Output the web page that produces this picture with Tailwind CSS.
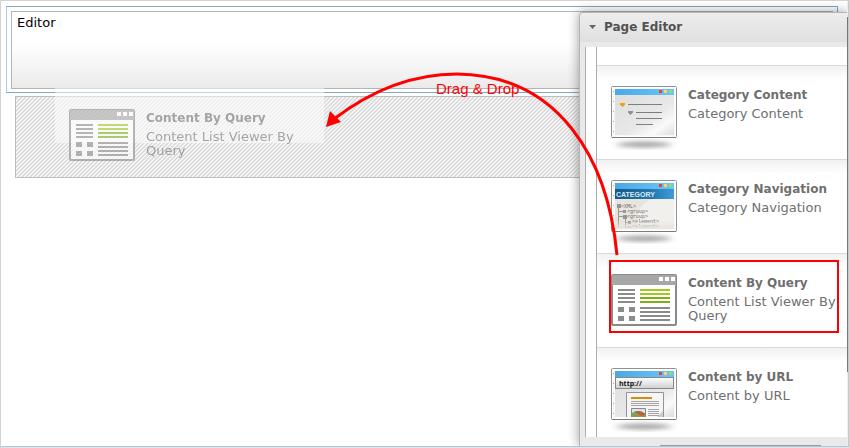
<!DOCTYPE html>
<html lang="en">
<head>
<meta charset="utf-8">
<meta name="viewport" content="width=device-width, initial-scale=1">
<title>Page Editor</title>
<script src="https://cdn.jsdelivr.net/npm/@tailwindcss/browser@4"></script>
</head>
<body class="bg-white font-['DejaVu_Sans',sans-serif] text-[13px] leading-[14px] text-[#6f6f6f]">
<svg class="absolute size-0" aria-hidden="true">
  <defs>
    <linearGradient id="sky"><stop stop-color="#49a9e5"/><stop offset="1" stop-color="#6cc5f8"/></linearGradient>
    <linearGradient id="paper" x2="1" y2="1"><stop stop-color="#dedede"/><stop offset=".6" stop-color="#e9e9e9"/><stop offset=".8" stop-color="#fafafa"/><stop offset="1" stop-color="#dcdcdc"/></linearGradient>
    <linearGradient id="navy"><stop stop-color="#165888"/><stop offset=".6" stop-color="#2475ae"/><stop offset="1" stop-color="#3e9cd8"/></linearGradient>
    <linearGradient id="fade" x2="0" y2="1"><stop stop-color="#e8e5df" stop-opacity="0"/><stop offset="1" stop-color="#e8e5df"/></linearGradient>
    <linearGradient id="bar" x2="0" y2="1"><stop stop-color="#fff"/><stop offset="1" stop-color="#cfcfcf"/></linearGradient>
    <filter id="soft" x="-20%" y="-100%" width="140%" height="300%"><feGaussianBlur stdDeviation="4 2"/></filter>
    <pattern id="hatch" width="4" height="4" patternUnits="userSpaceOnUse">
      <rect width="4" height="4" fill="#dadada"/>
      <path d="M-1 1L1 -1M0 4L4 0M3 5L5 3" stroke="#fff" stroke-width="1.2"/>
    </pattern>
    <symbol id="frame" viewBox="0 0 66 64">
      <ellipse cx="33" cy="58.500" rx="27" ry="3" fill="#777" opacity=".65" filter="url(#soft)"/>
      <rect x=".5" y=".5" width="65" height="51" rx="1" fill="#fff" stroke="#929292"/>
      <path d="M1 51.500h64" stroke="#7b7b7b"/>
      <rect x="2" y="2" width="62" height="48" fill="#f8f8f8"/>
      <rect x="4" y="9" width="59" height="40" fill="url(#paper)"/>
      <rect x="4" y="3" width="59" height="6" fill="url(#sky)"/>
      <path d="M2.500 5v44" stroke="#aaa" stroke-dasharray="1 9"/>
      <path d="M48 4h3v3h-3z" fill="#e8432c"/><path d="M53 4h3v3h-3z" fill="#ffd65a"/><path d="M58 4h3v3h-3z" fill="#87dc80"/>
    </symbol>
    <symbol id="query" viewBox="0 0 66 52">
      <rect x="1" y="1" width="64" height="50" rx="1" fill="#fff" stroke="#8a8a8a" stroke-width="2"/>
      <path d="M1 1h64v10H1z" fill="#a7a7a7"/>
      <path d="M48 3h4v4h-4zM54 3h4v4h-4zM60 3h4v4h-4z" fill="#fff"/>
      <path d="M7 16h17M7 20h17M7 24h17M7 28h17M29 34h30M29 38h30M29 42h30M29 46h30" stroke="#8b8b8b" stroke-width="2"/>
      <path d="M29 16h30M29 20h30" stroke="#a1c91f" stroke-width="2"/><path d="M29 24h30M29 28h30" stroke="#80ae16" stroke-width="2"/>
      <path d="M7 33h6v5H7zM18 33h6v5h-6zM7 42h6v5H7zM18 42h6v5h-6z" fill="#8b8b8b"/>
    </symbol>
  </defs>
</svg>

<div class="relative min-h-screen overflow-hidden border-t border-l border-[#d3d3d3]">
  <main class="p-[5px] pr-[11px]">
    <section class="border border-[#7da9c9] border-l-[#a9cde8] p-1 pb-[3px]">
      <h1 class="h-[78px] border border-[#b5b5b5] bg-linear-to-b from-white from-40% to-[#ebebeb] px-[5px] py-1 text-black">Editor</h1>
    </section>
    <section class="relative mt-[3px] ml-[9px] h-[82px] border border-[#bdbdbd]" aria-label="Drop area">
      <svg class="absolute inset-0 size-full" aria-hidden="true"><rect width="100%" height="100%" fill="url(#hatch)"/></svg>
    </section>
  </main>

  <div class="absolute top-[87px] left-[54px] w-[269px] px-[14px] pt-[21px]">
    <div class="absolute inset-x-0 top-0 h-[55px] bg-white/50"></div>
    <div class="relative flex gap-[11px] opacity-60">
      <svg class="h-[52px] w-[66px] shrink-0" aria-hidden="true"><use href="#query"/></svg>
      <div class="w-[148px]">
        <h2 class="mt-[2px] whitespace-nowrap text-[12px] font-bold">Content By Query</h2>
        <p class="mt-[5px]">Content List Viewer By Query</p>
      </div>
    </div>
  </div>

  <aside class="absolute top-[11px] right-[2px] bottom-[2px] flex w-[268px] flex-col rounded-tl-[4px] border-t border-l border-[#b5b5b5] bg-[#e9e9e9] shadow-[0_0_12px_rgba(0,0,0,0.4)]">
    <button type="button" class="flex h-[29px] shrink-0 items-center gap-2 rounded-tl-[4px] bg-linear-to-b from-[#ededed] to-[#e0e0e0] pb-px pl-[9px] text-[12px] font-bold text-[#525252]">
      <svg class="h-1 w-[7px]" viewBox="0 0 7 4" aria-hidden="true"><path d="M0 0h7L3.500 4z" fill="#666"/></svg>
      Page Editor
    </button>
    <div class="mt-[5px] ml-[5px] h-[390px] shrink-0 overflow-hidden border-l border-[#adadad] bg-white pl-[10px]">
      <ul class="border-l border-[#adadad] pt-[18px]">
        <li class="flex h-[94px] gap-[11px] border-t border-[#dadada] bg-linear-to-b from-[#f1f1f1] to-white to-15% pt-5 pl-[14px]">
          <svg class="h-16 w-[66px] shrink-0" viewBox="0 0 66 64" aria-hidden="true">
            <use href="#frame"/>
            <path d="M9 17h5v2h-1v1h-1v1h-1v-1h-1v-1H9z" fill="#f99b12"/><path d="M17 25h5v2h-1v1h-1v1h-1v-1h-1v-1h-1z" fill="#929292"/>
            <path d="M17 18.500h34M25 26.500h26M25 32.500h26M25 38.500h17" stroke="#7f7f7f"/>
          </svg>
          <div class="min-w-0 flex-1">
            <h2 class="mt-[2px] whitespace-nowrap text-[12px] font-bold">Category Content</h2>
            <p class="mt-[5px]">Category Content</p>
          </div>
        </li>
        <li class="flex h-[94px] gap-[11px] border-t border-[#dadada] bg-linear-to-b from-[#f1f1f1] to-white to-15% pt-5 pl-[14px]">
          <svg class="h-16 w-[66px] shrink-0" viewBox="0 0 66 64" aria-hidden="true">
            <use href="#frame"/>
            <path d="M4 9h59v10H4z" fill="url(#navy)"/>
            <path d="M4 19h59v30H4z" fill="#e8e5df"/><path d="M25 49Q25 23 42 19h21v30z" fill="#f2f0ec"/>
            <text x="5" y="16.500" font-family="Liberation Sans, sans-serif" font-size="7" font-weight="bold" fill="#d5eaf9">CATEGORY</text>
            <path d="M7.500 27v21M7 31.500h6M7 36.500h6M14.500 38v9M14 42.500h5M14 47.500h5" fill="none" stroke="#999"/>
            <path d="M6 24h4v4H6zM12 30h3v3h-3zM12 35h4v4h-4zM17 41h3v3h-3zM17 46h3v2h-3z" fill="#959595"/>
            <g font-family="Liberation Mono, monospace" font-size="5" fill="#666"><text x="10" y="28">&lt;XML&gt;</text><text x="16" y="33">&lt;group&gt;</text><text x="16" y="38">&lt;group&gt;</text><text x="21" y="43">&lt;element&gt;</text><text x="21" y="48">&lt;element&gt;</text></g>
            <path d="M4 40h59v9H4z" fill="url(#fade)"/>
          </svg>
          <div class="min-w-0 flex-1">
            <h2 class="mt-[2px] whitespace-nowrap text-[12px] font-bold">Category Navigation</h2>
            <p class="mt-[5px]">Category Navigation</p>
          </div>
        </li>
        <li class="relative flex h-[94px] gap-[11px] border-t border-[#dadada] bg-linear-to-b from-[#f1f1f1] to-white to-15% pt-5 pl-[14px]">
          <svg class="h-[52px] w-[66px] shrink-0" aria-hidden="true"><use href="#query"/></svg>
          <div class="w-[148px]">
            <h2 class="mt-[2px] whitespace-nowrap text-[12px] font-bold">Content By Query</h2>
            <p class="mt-[5px]">Content List Viewer By Query</p>
          </div>
          <div class="absolute top-[6px] right-2 left-3 h-[73px] border-2 border-[#f00]"></div>
        </li>
        <li class="flex h-[94px] gap-[11px] border-t border-[#dadada] bg-linear-to-b from-[#f1f1f1] to-white to-15% pt-5 pl-[14px]">
          <svg class="h-16 w-[66px] shrink-0" viewBox="0 0 66 64" aria-hidden="true">
            <use href="#frame"/>
            <rect x="4.500" y="9.500" width="58" height="11" fill="url(#bar)" stroke="#888"/>
            <text x="8" y="18" font-family="Open Sans, sans-serif" font-size="7" font-weight="bold" fill="#111">http://</text>
            <path d="M15.500 50V24.500h37V50" fill="#f5f5f5" stroke="#939393"/><path d="M45 50l7-7v7z" fill="#ccc"/>
            <path d="M20 30h21" stroke="#d98b0b" stroke-width="2"/>
            <path d="M20 33.500h28M20 35.500h28M20 37.500h28M37 41.500h11M37 43.500h11M37 45.500h11M37 47.500h11" stroke="#a5a5a5"/>
            <path d="M20.500 50v-9.500h14V50" fill="#d4e7f3" stroke="#888"/><path d="M21 45q4-4 13 0v5H21z" fill="#84a24c"/><path d="M24 44q6-3 10 3l-4 1z" fill="#c35d37"/>
            <path d="M4 49.500h59" stroke="#fff"/>
          </svg>
          <div class="min-w-0 flex-1">
            <h2 class="mt-[2px] whitespace-nowrap text-[12px] font-bold">Content by URL</h2>
            <p class="mt-[5px]">Content by URL</p>
          </div>
        </li>
      </ul>
    </div>
    <div class="mt-auto mr-[26px] ml-20 h-px bg-[#999]"></div>
  </aside>
  <div class="absolute top-0 right-0 bottom-0 w-[2px] border-r border-[#c8c8c8] bg-[#eee]"></div>
  <div class="absolute top-4 right-px h-[355px] w-px bg-[#777]"></div>
  <div class="absolute inset-x-0 bottom-0 h-[2px] border-t border-[#b9c5d3] bg-[#dce4ed]"></div>

  <svg class="pointer-events-none absolute -top-px -left-px h-[260px] w-[630px]" viewBox="0 0 630 260" role="img" aria-label="Drag from the panel to the page">
    <path d="M617 255C608 160 560 75 457 74C410 74 368 93 334 119" fill="none" stroke="#f00" stroke-width="3"/>
    <path d="M326 127L330 111L341 122z" fill="#f00"/>
    <text x="436" y="94" font-family="Liberation Sans, sans-serif" font-size="15" fill="#f00">Drag &amp; Drop</text>
  </svg>
</div>
</body>
</html>
